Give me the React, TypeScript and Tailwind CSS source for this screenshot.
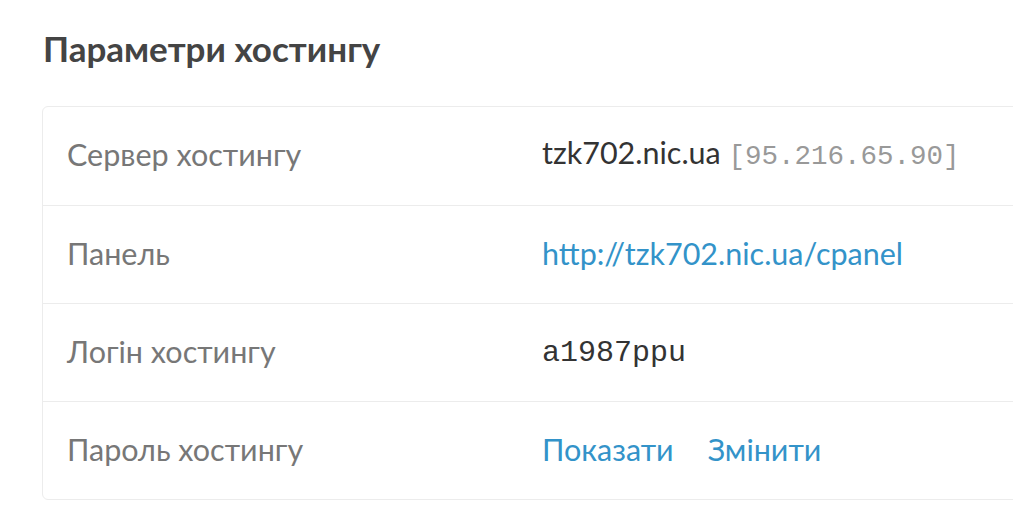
import React from "react";

const rows: { label: string; value: React.ReactNode }[] = [
  {
    label: "Сервер хостингу",
    value: (
      <>
        <span className="text-[#333]">tzk702.nic.ua</span>{" "}
        <span className="font-['Liberation_Mono',monospace] text-[27.5px] text-[#999]">[95.216.65.90]</span>
      </>
    ),
  },
  {
    label: "Панель",
    value: <a className="text-[#3393c9]">http://tzk702.nic.ua/cpanel</a>,
  },
  {
    label: "Логін хостингу",
    value: <span className="font-['Liberation_Mono',monospace] text-[30px] text-[#333]">a1987ppu</span>,
  },
  {
    label: "Пароль хостингу",
    value: (
      <div className="flex gap-[34px] text-[#3393c9]">
        <a>Показати</a>
        <a>Змінити</a>
      </div>
    ),
  },
];

export default function App() {
  return (
    <div className="min-h-[520px] bg-white font-['Lato','Noto_Sans',sans-serif] overflow-hidden">
      <div className="pl-[42px] pt-[27px]">
        <h2 className="text-[35px] font-bold text-[#444] leading-[42px] pl-[1px]">Параметри хостингу</h2>
        <div className="mt-[37px] w-[1100px] border border-[#ececec] rounded-[6px]">
          {rows.map((r, i) => (
            <div
              key={r.label}
              className={`flex items-center h-[98px] pl-[24px] pb-[4px] text-[30.5px] leading-[36px] ${i > 0 ? "border-t border-[#ececec]" : ""}`}
            >
              <div className="w-[475px] text-[#777]">{r.label}</div>
              <div>{r.value}</div>
            </div>
          ))}
        </div>
      </div>
    </div>
  );
}
